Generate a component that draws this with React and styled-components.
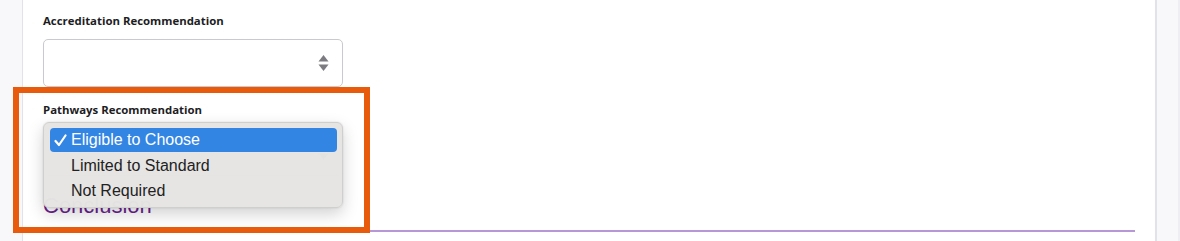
import React from "react";
import styled, { createGlobalStyle } from "styled-components";

const GlobalStyle = createGlobalStyle`
  body {
    margin: 0;
    background: #ffffff;
    font-family: "Open Sans", "Liberation Sans", sans-serif;
  }
`;

const Page = styled.div`
  position: relative;
  display: flex;
  width: 1180px;
  height: 241px;
  overflow: hidden;
  background: #ffffff;
`;

const Gutter = styled.div`
  width: ${(props) => props.width}px;
  flex: none;
  background: #f8f8fb;
  border-left: ${(props) => (props.side === "right" ? "2px solid #e2e2ea" : "none")};
  border-right: ${(props) => (props.side === "left" ? "1px solid #e2e2ea" : "none")};
  box-shadow: ${(props) =>
    props.side === "right" ? "inset -2px 0 0 #eeeef3" : "none"};
`;

const Main = styled.main`
  flex: 1;
  padding: 13px 20px 0 20px;
  display: flex;
  flex-direction: column;
`;

const Label = styled.label`
  display: block;
  font-size: 11.4px;
  font-weight: 700;
  line-height: 16px;
  color: #1d1d1f;
  margin-top: ${(props) => props.top || 0}px;
  margin-bottom: 10px;
`;

const Field = styled.div`
  position: relative;
  width: 300px;
`;

const SelectBox = styled.div`
  box-sizing: border-box;
  height: 48px;
  border: 1px solid #c9c9cf;
  border-radius: 5px;
  background: #ffffff;
  display: flex;
  align-items: center;
  justify-content: flex-end;
  padding-right: 13px;
`;

const Popup = styled.ul`
  position: absolute;
  top: -6px;
  left: 0;
  width: 300px;
  box-sizing: border-box;
  margin: 0;
  padding: 5px 5px 4px 6px;
  list-style: none;
  background: rgba(229, 228, 226, 0.98);
  border: 1px solid #cfcfcd;
  border-radius: 6px;
  box-shadow: 0 6px 16px rgba(0, 0, 0, 0.18), 0 0 2px rgba(0, 0, 0, 0.12);
  z-index: 2;
`;

const Option = styled.li`
  display: flex;
  align-items: center;
  padding-left: 4px;
  border-radius: 4px;
  font-family: "Liberation Sans", "Noto Sans", sans-serif;
  font-size: 16px;
  color: ${(props) => (props.active ? "#ffffff" : "#222222")};
  background: ${(props) => (props.active ? "#3385e4" : "transparent")};
  height: ${(props) => (props.active ? "24px" : "25px")};
  margin-bottom: ${(props) => (props.active ? "1px" : "0")};
`;

const Check = styled.span`
  width: 17px;
  flex: none;
  display: flex;
  align-items: center;
`;

const Heading = styled.h2`
  margin: 16px 0 0 0;
  padding-bottom: 10px;
  font-family: "Liberation Sans", sans-serif;
  font-size: 22px;
  font-weight: 400;
  line-height: 28px;
  color: #6b1f8f;
  border-bottom: 2px solid #b797d6;
`;

const Highlight = styled.div`
  position: absolute;
  left: 13px;
  top: 87px;
  width: 357px;
  height: 146px;
  box-sizing: border-box;
  border: 6px solid #e85a0c;
  pointer-events: none;
  z-index: 3;
`;

function UpDownArrows() {
  return (
    <svg width="11" height="18" viewBox="0 0 11 18">
      <path d="M5.5 1 L10.5 7.5 H0.5 Z" fill="#7c7c80" />
      <path d="M5.5 17 L10.5 10.5 H0.5 Z" fill="#7c7c80" />
    </svg>
  );
}

function CheckMark() {
  return (
    <svg width="13" height="13" viewBox="0 0 13 13">
      <path
        d="M1.5 7 L5 11 L11.5 1.5"
        fill="none"
        stroke="#ffffff"
        strokeWidth="2.2"
        strokeLinecap="round"
        strokeLinejoin="round"
      />
    </svg>
  );
}

const options = ["Eligible to Choose", "Limited to Standard", "Not Required"];

export default function App() {
  return (
    <>
      <GlobalStyle />
      <Page>
        <Gutter width={22} side="left" />
        <Main>
          <Label>Accreditation Recommendation</Label>
          <Field>
            <SelectBox>
              <UpDownArrows />
            </SelectBox>
          </Field>

          <Label top={15}>Pathways Recommendation</Label>
          <Field>
            <SelectBox>
              <UpDownArrows />
            </SelectBox>
            <Popup>
              {options.map((opt, i) => (
                <Option key={opt} active={i === 0}>
                  <Check>{i === 0 && <CheckMark />}</Check>
                  {opt}
                </Option>
              ))}
            </Popup>
          </Field>

          <Heading>Conclusion</Heading>
        </Main>
        <Gutter width={23} side="right" />
        <Highlight />
      </Page>
    </>
  );
}
